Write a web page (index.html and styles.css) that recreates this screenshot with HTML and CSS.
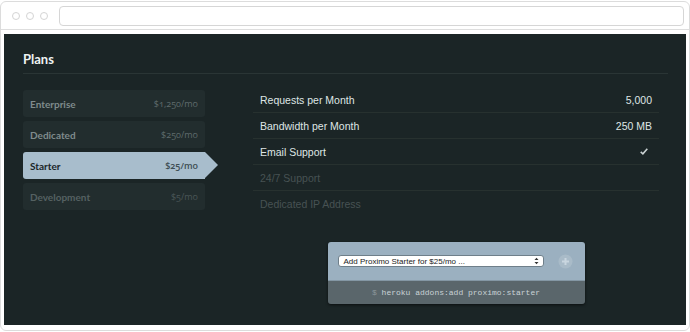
FILE: index.html
```html
<!DOCTYPE html>
<html>

<head>
    <link rel="stylesheet" href="styles.css">
</head>

<body>
    <div class="browser">
        <!-- window chrome -->
        <div class="toolbar">
            <span class="dot"></span>
            <span class="dot"></span>
            <span class="dot"></span>
            <div class="address"></div>
        </div>

        <div class="panel">
            <div class="panel-title">Plans</div>

            <div class="panel-body">
                <ul class="plan-list">
                    <li class="plan">
                        <span class="plan-name">Enterprise</span>
                        <span class="plan-price">$1,250/mo</span>
                    </li>
                    <li class="plan">
                        <span class="plan-name">Dedicated</span>
                        <span class="plan-price">$250/mo</span>
                    </li>
                    <li class="plan plan-active">
                        <span class="plan-name">Starter</span>
                        <span class="plan-price">$25/mo</span>
                    </li>
                    <li class="plan plan-dim">
                        <span class="plan-name">Development</span>
                        <span class="plan-price">$5/mo</span>
                    </li>
                </ul>

                <div class="details">
                    <ul class="features">
                        <li class="feature">
                            <span>Requests per Month</span>
                            <span>5,000</span>
                        </li>
                        <li class="feature">
                            <span>Bandwidth per Month</span>
                            <span>250 MB</span>
                        </li>
                        <li class="feature">
                            <span>Email Support</span>
                            <svg class="check" width="8" height="7" viewBox="0 0 8 7">
                                <path d="M0.7 3.9 L2.9 5.8 L7.3 0.8" fill="none" stroke="#c9d1d2" stroke-width="1.6" />
                            </svg>
                        </li>
                        <li class="feature feature-off">
                            <span>24/7 Support</span>
                        </li>
                        <li class="feature feature-off">
                            <span>Dedicated IP Address</span>
                        </li>
                    </ul>

                    <div class="addon-box">
                        <div class="addon-top">
                            <div class="fake-select">
                                <span>Add Proximo Starter for $25/mo ...</span>
                                <svg width="5" height="8" viewBox="0 0 5 8">
                                    <path d="M0.5 3 L2.5 0.8 L4.5 3 Z M0.5 5 L2.5 7.2 L4.5 5 Z" fill="#333" />
                                </svg>
                            </div>
                            <svg class="add-btn" width="15" height="15" viewBox="0 0 15 15">
                                <circle cx="7.5" cy="7.5" r="7" fill="#a9bbc8" />
                                <path d="M7.5 4 V11 M4 7.5 H11" stroke="#c9d6df" stroke-width="2" />
                            </svg>
                        </div>
                        <div class="addon-cmd"><span class="prompt">$</span> heroku addons:add proximo:starter</div>
                    </div>
                </div>
            </div>
        </div>
    </div>
</body>

</html>
```

FILE: styles.css
```css
/* page + window frame */
body {
    margin: 0;
    padding-top: 1px;
    background-color: #fff;
}

.browser {
    width: 690px;
    box-sizing: border-box;
    border: 1px solid #dcdcdc;
    border-radius: 6px;
    padding: 0 3px 5px 3px;
    background-color: #fff;
}

.toolbar {
    height: 27px;
    display: flex;
    align-items: center;
    padding: 0 2px 0 11px;
    margin: 0 -3px 4px -3px;
    border-bottom: 1px solid #dedede;
}

.dot {
    width: 6px;
    height: 6px;
    border: 1px solid #d4d4d4;
    border-radius: 50%;
    margin-right: 6px;
}

.address {
    flex: 1;
    height: 18px;
    margin-left: 5px;
    margin-right: 3px;
    border: 1px solid #d6d6d6;
    border-radius: 4px;
}

/* dark panel */
.panel {
    height: 291px;
    box-sizing: border-box;
    padding: 17px 18px 0 19px;
    background-color: #1b2526;
}

.panel-title {
    font-family: Lato, sans-serif;
    font-weight: bold;
    font-size: 13px;
    line-height: 16px;
    color: #eef2f2;
    padding-bottom: 6px;
    border-bottom: 1px solid #2a3535;
}

.panel-body {
    display: flex;
    margin-top: 13px;
}

ul {
    list-style: none;
    margin: 0;
    padding: 0;
}

/* plan list on the left */
.plan-list {
    width: 182px;
    margin-top: 3px;
    display: flex;
    flex-direction: column;
    gap: 4px;
}

.plan {
    position: relative;
    height: 27px;
    display: flex;
    align-items: center;
    justify-content: space-between;
    padding: 0 7px;
    border-radius: 3px;
    background-color: #222d2e;
    font-family: Lato, sans-serif;
    font-size: 10px;
}

.plan-name {
    font-weight: bold;
    color: #7f8b8c;
}

.plan-price {
    font-family: "Open Sans", Lato, sans-serif;
    font-variant-numeric: oldstyle-nums;
    font-size: 9px;
    color: #5f6b6c;
}

.plan-dim .plan-name {
    color: #556162;
}

.plan-dim .plan-price {
    color: #4a5657;
}

.plan-active {
    background-color: #a8bdcc;
    border-radius: 3px 0 0 3px;
}

.plan-active::after {
    content: "";
    position: absolute;
    left: 100%;
    top: 0;
    border-left: 13px solid #a8bdcc;
    border-top: 13.5px solid transparent;
    border-bottom: 13.5px solid transparent;
}

.plan-active .plan-name {
    color: #1a2528;
}

.plan-active .plan-price {
    color: #3e4d54;
    font-weight: 600;
}

/* features on the right */
.details {
    width: 406px;
    margin-left: 48px;
}

.feature {
    height: 25px;
    display: flex;
    align-items: center;
    justify-content: space-between;
    padding: 0 7px;
    border-bottom: 1px solid #27312f;
    font-family: "Liberation Sans", Arial, sans-serif;
    font-size: 10.5px;
    color: #dfe5e5;
}

.feature:last-child {
    border-bottom: none;
}

.feature-off {
    color: #475253;
}

.check {
    margin-right: 4px;
}

/* add-on box */
.addon-box {
    width: 257px;
    margin: 26px auto 0 auto;
    border-radius: 3px;
    overflow: hidden;
    box-shadow: 0 1px 3px rgba(0, 0, 0, 0.6);
}

.addon-top {
    height: 38px;
    display: flex;
    align-items: center;
    padding: 0 12px 0 10px;
    background-color: #9bb0c0;
    border-bottom: 1px solid #8497a4;
}

.fake-select {
    width: 206px;
    height: 12px;
    box-sizing: border-box;
    display: flex;
    align-items: center;
    justify-content: space-between;
    padding: 0 4px 0 5px;
    background-color: #fff;
    border: 1px solid #6f7f8a;
    border-radius: 3px;
    font-family: "Liberation Sans Narrow", "Liberation Sans", sans-serif;
    font-size: 8px;
    color: #222;
}

.add-btn {
    margin-left: auto;
}

.addon-cmd {
    height: 23px;
    line-height: 23px;
    text-align: center;
    background-color: #5a666b;
    font-family: "Liberation Mono", monospace;
    font-size: 8px;
    color: #c9d2d6;
}

.prompt {
    color: #8a959a;
}
```
